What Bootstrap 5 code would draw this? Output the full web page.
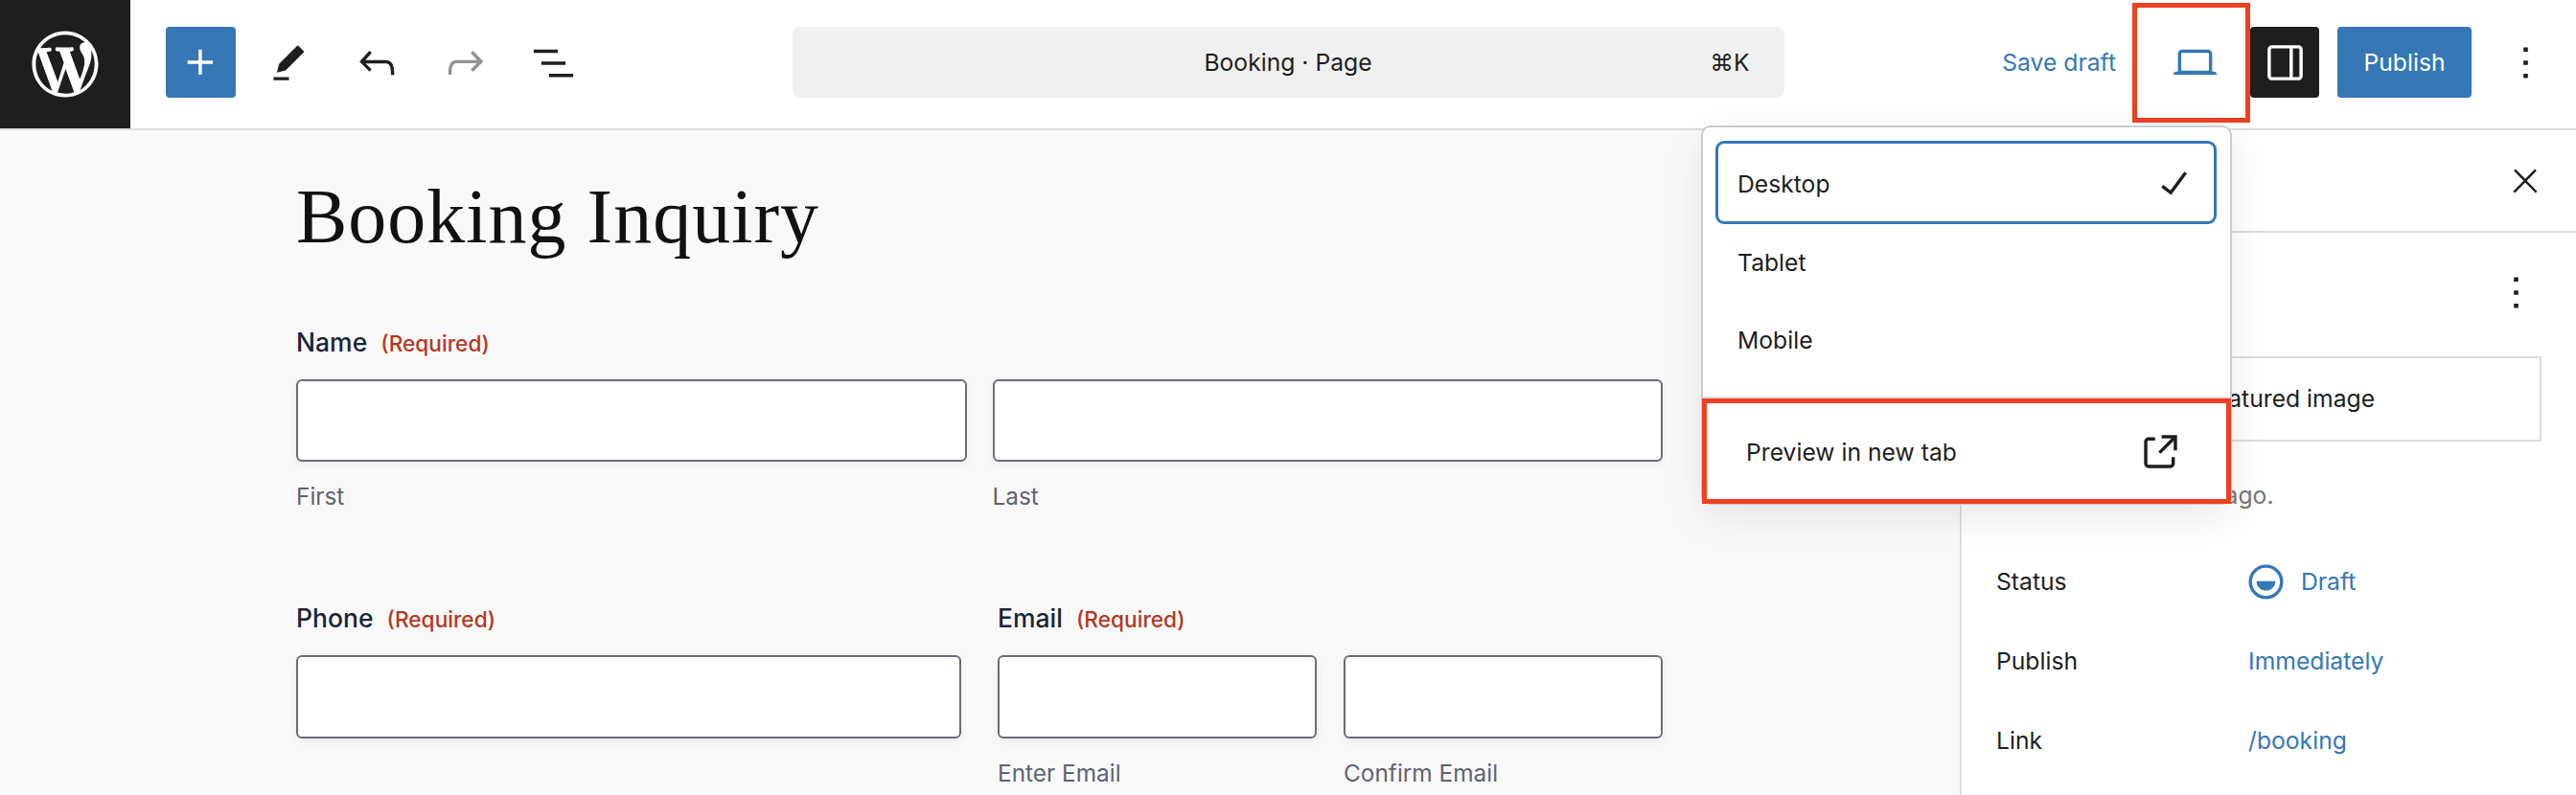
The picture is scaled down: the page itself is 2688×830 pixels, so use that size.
<!DOCTYPE html>
<html lang="en">
<head>
<meta charset="utf-8">
<title>Booking Inquiry</title>
<link href="https://cdn.jsdelivr.net/npm/bootstrap@5.3.0/dist/css/bootstrap.min.css" rel="stylesheet">
<style>
html,body{height:830px;overflow:hidden}
body{font-family:Inter,"Noto Sans",sans-serif;font-size:24.7px;color:#1e1e1e;background:#fff;position:relative}
.ico{width:55px;height:55px;fill:currentColor;flex:none;display:block}
.topbar{height:136px;border-bottom:2px solid #ddd;background:#fff;padding-bottom:4px}
.side-l,.side-r{flex:1 1 0}
.wp-logo{width:136px;height:134px;margin-bottom:-4px;background:#1e1e1e;color:#fff}
.wp-logo svg{width:76px;height:76px;fill:#fff}
.tool-group{margin-left:37px;gap:19px}
.tool{width:73px;height:74px;padding:0;border:0;border-radius:4px;color:#1e1e1e;display:flex;align-items:center;justify-content:center;background:transparent}
.tool.is-off{color:#949494}
.tool.is-blue{background:#3578b5;color:#fff}
.tool.is-dark{background:#1e1e1e;color:#fff;width:72px}
.search-box{width:1035px;height:74px;background:#f0f0f0;border-radius:8px;position:relative}
.bar-text{padding-top:2px}
.search-key{position:absolute;right:36px;top:calc(50% + 1px);transform:translateY(-50%)}
.save-link{color:#3578b5;margin-right:17px}
.view-btn{width:123px;height:125px;border:5px solid #ee4023;color:#3578b5;display:flex;align-items:center;justify-content:center;padding-left:8px}
.pub-btn{width:140px;height:74px;background:#3578b5;color:#fff;border-radius:4px;border:0;padding:2px 0 0;margin-left:19px}
.kebab{margin-left:20px;margin-right:16px}
.main-area{height:694px}
.canvas-area{background:#f9f9f9;flex:1 1 0;padding-left:309px;padding-right:310px;padding-top:40px}
.doc-title{font-family:"Liberation Serif",serif;font-size:80px;line-height:100px;font-weight:400;letter-spacing:1px;color:#111;margin:0 0 65px}
.fld-label{font-size:26.5px;line-height:32px;height:34px;font-weight:500;color:#1a2438;margin-bottom:21px}
.req{color:#b5381f;font-size:22.7px;margin-left:7px;font-weight:500}
.fld-input.form-control{height:86px;border:2px solid #6b6e78;border-radius:6px;box-shadow:0 3px 8px rgba(0,0,0,.06);background:#fff}
.fld-input.is-tall{height:87px}
.fld-sub{font-size:24.4px;line-height:34px;color:#5f6370;margin-top:19px}
.gap-a{gap:27px}
.gap-b{gap:38px}
.gap-c{gap:28px}
.row-two{margin-top:94px}
.col-half{flex:1 1 0;min-width:0}
.inspector{width:643px;flex:none;border-left:2px solid #ddd;background:#fff;padding:0}
.insp-head{height:107px;border-bottom:2px solid #ddd;padding-right:33px}
.close-ico{width:40px;height:40px;fill:currentColor;display:block}
.insp-body{padding:35px 36px 0 36px}
.insp-more{height:55px;padding-right:0;margin-right:-1px}
.feat-btn{height:89px;margin-top:39px;border:2px solid #ddd;border-radius:2px}
.insp-note{color:#757575;line-height:34px;margin-top:39px;margin-bottom:31px;white-space:nowrap}
.meta-row{height:83px;padding-top:2px}
.meta-key{width:263px;flex:none}
.meta-val{color:#3578b5}
.status-ico{width:37px;height:37px;margin-right:18px;flex:none}
.views-pop{position:absolute;left:1775px;top:131px;width:554px;height:396px;background:#fff;border:2px solid #ccc;border-radius:10px;box-shadow:0 12px 40px rgba(0,0,0,.09);z-index:5;overflow:visible}
.views-list{padding:17px 17px 20px 16px;height:283px;border-bottom:2px solid #ddd}
.view-item.list-group-item{height:82px;padding:0 14px 0 20px;border:0;background:transparent;color:#1e1e1e}
.view-item.is-on{box-shadow:0 0 0 3px #3578b5;border-radius:6px;position:relative}
.item-text{padding-top:5px}
.item-text.is-first{padding-top:3px}
.preview-row{margin-left:-1px;margin-right:-1px;height:110px;border:5px solid #ee4023;padding:0 41px;color:#1e1e1e}
.preview-text{padding-top:3px}
</style>
</head>
<body>
<header class="topbar d-flex align-items-center">
  <div class="side-l d-flex align-items-center">
    <div class="wp-logo d-flex align-items-center justify-content-center">
      <svg viewBox="-1 -1 22 22" aria-hidden="true"><path d="M20 10c0-5.51-4.49-10-10-10C4.48 0 0 4.49 0 10c0 5.52 4.48 10 10 10 5.51 0 10-4.48 10-10zM7.78 15.37L4.37 6.22c.55-.02 1.17-.08 1.17-.08.5-.06.44-1.13-.06-1.11 0 0-1.45.11-2.37.11-.18 0-.37 0-.58-.01C4.12 2.69 6.87 1.11 10 1.11c2.33 0 4.45.87 6.05 2.34-.68-.11-1.65.39-1.65 1.58 0 .74.45 1.36.9 2.1.35.61.55 1.36.55 2.46 0 1.49-1.4 5-1.4 5l-3.03-8.37c.54-.02.82-.17.82-.17.5-.05.44-1.25-.06-1.22 0 0-1.44.12-2.38.12-.87 0-2.33-.12-2.33-.12-.5-.03-.56 1.2-.06 1.22l.92.08 1.26 3.41zM17.41 10c.24-.64.74-1.87.43-4.25.7 1.29 1.05 2.71 1.05 4.25 0 3.29-1.73 6.24-4.4 7.78.97-2.59 1.94-5.2 2.92-7.78zM6.1 18.09C3.12 16.65 1.11 13.53 1.11 10c0-1.3.23-2.48.72-3.59C3.25 10.3 4.67 14.2 6.1 18.09zm4.03-6.63l2.58 6.98c-.86.29-1.76.45-2.71.45-.79 0-1.57-.11-2.29-.33.81-2.38 1.62-4.74 2.42-7.1z"/></svg>
    </div>
    <div class="tool-group d-flex align-items-center">
      <button class="tool is-blue" aria-label="Add"><svg class="ico" viewBox="0 0 24 24"><path d="M11 12.5V17.5H12.5V12.5H17.5V11H12.5V6H11V11H6V12.5H11Z"/></svg></button>
      <button class="tool" aria-label="Tools"><svg class="ico" viewBox="0 0 24 24"><path d="m19 7-3-3-8.5 8.5-1 4 4-1L19 7Zm-7 11.5H5V20h7v-1.5Z"/></svg></button>
      <button class="tool" aria-label="Undo"><svg class="ico" viewBox="0 0 24 24"><path d="M18.3 11.7c-.6-.6-1.4-.9-2.3-.9H6.7l2.9-3.3-1.1-1-4.5 5L8.5 16l1-1-2.7-2.7H16c.5 0 .9.2 1.3.5 1 1 1 3.4 1 4.5v.3h1.5v-.2c0-1.5 0-4.3-1.5-5.7z"/></svg></button>
      <button class="tool is-off" aria-label="Redo"><svg class="ico" viewBox="0 0 24 24"><path d="M15.6 6.5l-1.1 1 2.9 3.3H8c-.9 0-1.7.3-2.3.9-1.4 1.5-1.4 4.2-1.4 5.6v.2h1.5v-.3c0-1.1 0-3.5 1-4.5.3-.3.7-.5 1.3-.5h9.2L14.5 15l1.1 1.1 4.6-4.6-4.6-5z"/></svg></button>
      <button class="tool" aria-label="List view"><svg class="ico" viewBox="0 0 24 24"><path d="M3 6h11v1.5H3V6Zm3.5 5.5h11V13h-11v-1.5ZM21 17H10v1.5h11V17Z"/></svg></button>
    </div>
  </div>
  <div class="search-box d-flex align-items-center justify-content-center">
    <span class="bar-text">Booking · Page</span>
    <span class="search-key">⌘K</span>
  </div>
  <div class="side-r d-flex align-items-center justify-content-end">
    <span class="save-link bar-text">Save draft</span>
    <div class="view-btn"><svg class="ico" viewBox="0 0 24 24"><path d="M20.5 16h-.7V8c0-1.1-.9-2-2-2H6.2c-1.1 0-2 .9-2 2v8h-.7c-.8 0-1.5.7-1.5 1.5h20c0-.8-.7-1.5-1.5-1.5zM5.7 8c0-.3.2-.5.5-.5h11.6c.3 0 .5.2.5.5v7.6H5.7V8z"/></svg></div>
    <button class="tool is-dark" aria-label="Settings"><svg class="ico" viewBox="0 0 24 24"><path d="M18 4H6c-1.1 0-2 .9-2 2v12c0 1.1.9 2 2 2h12c1.1 0 2-.9 2-2V6c0-1.1-.9-2-2-2zm-4 14.5H6c-.3 0-.5-.2-.5-.5V6c0-.3.2-.5.5-.5h8v13zm4.5-.5c0 .3-.2.5-.5.5h-2.5v-13H18c.3 0 .5.2.5.5v12z"/></svg></button>
    <button class="pub-btn">Publish</button>
    <button class="tool kebab" aria-label="Options"><svg class="ico" viewBox="0 0 24 24"><path d="M13 19h-2v-2h2v2zm0-6h-2v-2h2v2zm0-6h-2V5h2v2z"/></svg></button>
  </div>
</header>

<div class="main-area d-flex">
  <main class="canvas-area">
    <h1 class="doc-title">Booking Inquiry</h1>
    <div class="fld-label">Name <span class="req">(Required)</span></div>
    <div class="d-flex gap-a">
      <div class="col-half"><input class="form-control fld-input" type="text" aria-label="First"><div class="fld-sub">First</div></div>
      <div class="col-half"><input class="form-control fld-input" type="text" aria-label="Last"><div class="fld-sub">Last</div></div>
    </div>
    <div class="d-flex gap-b row-two">
      <div class="col-half">
        <div class="fld-label">Phone <span class="req">(Required)</span></div>
        <input class="form-control fld-input is-tall" type="text" aria-label="Phone">
      </div>
      <div class="col-half">
        <div class="fld-label">Email <span class="req">(Required)</span></div>
        <div class="d-flex gap-c">
          <div class="col-half"><input class="form-control fld-input is-tall" type="text" aria-label="Enter Email"><div class="fld-sub">Enter Email</div></div>
          <div class="col-half"><input class="form-control fld-input is-tall" type="text" aria-label="Confirm Email"><div class="fld-sub">Confirm Email</div></div>
        </div>
      </div>
    </div>
  </main>
  <aside class="inspector">
    <div class="insp-head d-flex align-items-center justify-content-end">
      <svg class="close-ico" viewBox="0 0 24 24"><path d="M13 11.8l6.1-6.3-1-1-6.1 6.2-6.1-6.2-1 1 6.1 6.3-6.5 6.7 1 1 6.5-6.6 6.5 6.6 1-1z"/></svg>
    </div>
    <div class="insp-body">
      <div class="insp-more d-flex align-items-center justify-content-end"><svg class="ico" viewBox="0 0 24 24"><path d="M13 19h-2v-2h2v2zm0-6h-2v-2h2v2zm0-6h-2V5h2v2z"/></svg></div>
      <div class="feat-btn d-flex align-items-center justify-content-center">Set featured image</div>
      <div class="insp-note">Last edited 1 minute ago.</div>
      <div class="meta-row d-flex align-items-center"><span class="meta-key">Status</span>
        <span class="meta-val d-flex align-items-center"><svg class="status-ico" viewBox="0 0 24 24"><circle cx="12" cy="12" r="10.6" fill="none" stroke="#3578b5" stroke-width="2.2"/><path d="M5.5 11h13a6.5 6.5 0 0 1-13 0z" fill="#3578b5" transform="translate(0 .5)"/></svg>Draft</span></div>
      <div class="meta-row d-flex align-items-center"><span class="meta-key">Publish</span><span class="meta-val">Immediately</span></div>
      <div class="meta-row d-flex align-items-center"><span class="meta-key">Link</span><span class="meta-val">/booking</span></div>
    </div>
  </aside>
</div>

<div class="views-pop">
  <div class="views-list list-group list-group-flush">
    <div class="list-group-item view-item is-on d-flex align-items-center justify-content-between"><span class="item-text is-first">Desktop</span><svg class="ico" viewBox="0 0 24 24"><path d="M16.7 7.1l-6.3 8.5-3.3-2.5-.9 1.2 4.5 3.4L17.9 8z"/></svg></div>
    <div class="list-group-item view-item d-flex align-items-center"><span class="item-text">Tablet</span></div>
    <div class="list-group-item view-item d-flex align-items-center"><span class="item-text">Mobile</span></div>
  </div>
  <div class="preview-row d-flex align-items-center justify-content-between"><span class="preview-text">Preview in new tab</span><svg class="ico" viewBox="0 0 24 24"><path d="M19.5 4.5h-7V6h4.44l-5.97 5.97 1.06 1.06L18 7.06v4.44h1.5v-7Zm-13 1a2 2 0 0 0-2 2v10a2 2 0 0 0 2 2h10a2 2 0 0 0 2-2v-3H17v3a.5.5 0 0 1-.5.5h-10a.5.5 0 0 1-.5-.5v-10a.5.5 0 0 1 .5-.5h3V5.5h-3Z"/></svg></div>
</div>
<script src="https://cdn.jsdelivr.net/npm/bootstrap@5.3.0/dist/js/bootstrap.bundle.min.js"></script>
</body>
</html>
